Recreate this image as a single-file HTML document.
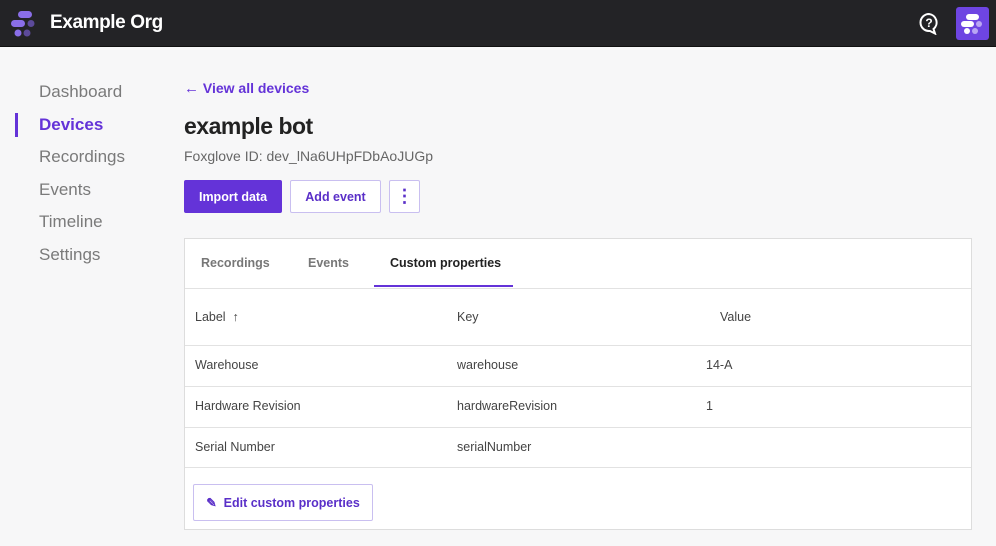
<!DOCTYPE html>
<html><head><style>
*{box-sizing:border-box;margin:0;padding:0}
body{width:996px;height:546px;overflow:hidden;background:#f7f7f8;font-family:"Liberation Sans",sans-serif;position:relative}
.hdr{position:absolute;left:0;top:0;width:996px;height:47px;background:#232326;border-bottom:1px solid #111}
.org{position:absolute;left:50px;top:12px;color:#fff;font-weight:bold;font-size:19px;letter-spacing:-0.4px}
.nav div{position:absolute;left:39px;font-size:17px;color:#7a7a7a}
.nav .act{color:#6433d8;font-weight:bold}
.bar{position:absolute;left:15px;top:113px;width:3px;height:24px;background:#6433d8}
.back{position:absolute;left:184px;top:80px;color:#6433d8;font-weight:bold;font-size:14px}
h1{position:absolute;left:184px;top:113px;font-size:23px;color:#222;letter-spacing:-0.5px}
.fid{position:absolute;left:184px;top:148px;font-size:14px;color:#666}
.btn{position:absolute;top:180px;height:33px;border-radius:2px;font-size:12.5px;font-weight:bold;display:flex;align-items:center;justify-content:center}
.card{position:absolute;left:184px;top:238px;width:788px;height:292px;background:#fff;border:1px solid #ddd}
.tab{position:absolute;top:17px;font-size:12.5px;font-weight:bold;color:#777}
.row{position:absolute;left:0;width:786px;border-top:1px solid #e2e2e2;font-size:12.5px;color:#444}
.row span{position:absolute;top:0}
</style></head><body>
<div class="hdr">
<svg style="position:absolute;left:10px;top:10px" width="30" height="28" viewBox="0 0 30 28">
<g fill="#8a6ee8"><rect x="8" y="1" width="14" height="7" rx="3.5"/><rect x="1" y="10" width="14" height="7" rx="3.5"/><circle cx="8" cy="23" r="3.5"/></g>
<g fill="#5c4a9a"><circle cx="21" cy="13.5" r="3.5"/><circle cx="17" cy="23" r="3.5"/></g></svg>
<div class="org">Example Org</div>
<svg style="position:absolute;left:918px;top:12px" width="22" height="23" viewBox="0 0 22 23"><path d="M11 2a8.5 8.5 0 1 0 0 17h1l5 2.5-1.5-4.5A8.5 8.5 0 0 0 11 2z" fill="none" stroke="#fff" stroke-width="2"/><text x="11" y="15" font-size="12" font-weight="bold" fill="#fff" text-anchor="middle" font-family="Liberation Sans">?</text></svg>
<div style="position:absolute;left:956px;top:7px;width:33px;height:33px;background:#6e45e2;border-radius:3px">
<svg width="33" height="33" viewBox="0 0 33 33"><g fill="#fff"><rect x="10" y="7" width="13" height="6" rx="3"/><rect x="5" y="14" width="13" height="6" rx="3"/><circle cx="11" cy="24" r="3"/></g><g fill="#b9a6f3"><circle cx="23" cy="17" r="3"/><circle cx="19" cy="24" r="3"/></g></svg></div>
</div>
<div class="bar"></div>
<div class="nav">
<div style="top:82px">Dashboard</div>
<div class="act" style="top:115px">Devices</div>
<div style="top:147px">Recordings</div>
<div style="top:180px">Events</div>
<div style="top:212px">Timeline</div>
<div style="top:245px">Settings</div>
</div>
<div class="back"><span style="font-size:15px">←</span> View all devices</div>
<h1>example bot</h1>
<div class="fid">Foxglove ID: dev_lNa6UHpFDbAoJUGp</div>
<div class="btn" style="left:184px;width:98px;background:#6433d8;color:#fff">Import data</div>
<div class="btn" style="left:290px;width:91px;border:1px solid #c9bff0;color:#5a2fc8;background:#fff">Add event</div>
<div class="btn" style="left:389px;width:31px;border:1px solid #c9bff0;background:#fff;color:#5a2fc8;font-size:18px">⋮</div>
<div class="card">
<div class="tab" style="left:16px">Recordings</div>
<div class="tab" style="left:123px">Events</div>
<div class="tab" style="left:205px;color:#222">Custom properties</div>
<div style="position:absolute;left:189px;top:46px;width:139px;height:2px;background:#6433d8"></div>
<div class="row" style="top:49px;height:58px"><span style="left:10px;top:21px">Label &nbsp;↑</span><span style="left:272px;top:21px">Key</span><span style="left:535px;top:21px">Value</span></div>
<div class="row" style="top:106px;height:41px"><span style="left:10px;top:12px">Warehouse</span><span style="left:272px;top:12px">warehouse</span><span style="left:521px;top:12px">14-A</span></div>
<div class="row" style="top:147px;height:41px"><span style="left:10px;top:12px">Hardware Revision</span><span style="left:272px;top:12px">hardwareRevision</span><span style="left:521px;top:12px">1</span></div>
<div class="row" style="top:188px;height:41px"><span style="left:10px;top:12px">Serial Number</span><span style="left:272px;top:12px">serialNumber</span></div>
<div class="row" style="top:228px;height:1px"></div>
<div class="btn" style="left:8px;top:245px;width:180px;height:37px;border:1px solid #c9bff0;color:#5a2fc8">✎&nbsp; Edit custom properties</div>
</div>
</body></html>
